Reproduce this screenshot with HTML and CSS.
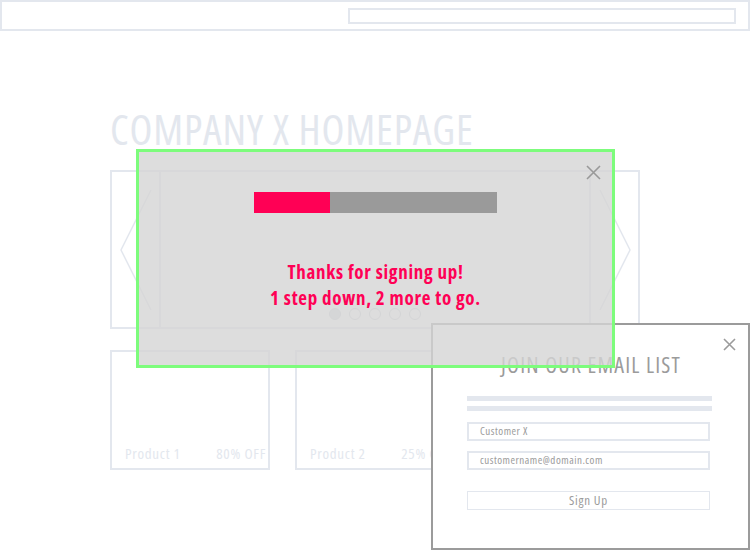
FILE: index.html
```html
<!DOCTYPE html>
<html>
<head>
<meta charset="utf-8">
<link rel="stylesheet" href="styles.css">
</head>
<body>
<header class="topbar"><div class="search"></div></header>
<main class="page">
  <h1 class="title">COMPANY X HOMEPAGE</h1>
  <section class="carousel">
    <div class="side">
      <svg class="chev" width="32" height="124" viewBox="0 0 32 124"><path d="M31 2 L1 62 L31 122" fill="none" stroke="#e3e7ee" stroke-width="1.5"/></svg>
    </div>
    <div class="slide">
      <div class="dots"><span class="dot on"></span><span class="dot"></span><span class="dot"></span><span class="dot"></span><span class="dot"></span></div>
    </div>
    <div class="side">
      <svg class="chev" width="32" height="124" viewBox="0 0 32 124"><path d="M1 2 L31 62 L1 122" fill="none" stroke="#e3e7ee" stroke-width="1.5"/></svg>
    </div>
  </section>
  <section class="products">
    <div class="card"><span>Product 1</span><span>80% OFF</span></div>
    <div class="card"><span>Product 2</span><span>25% OFF</span></div>
    <div class="card"></div>
  </section>
</main>

<div class="email">
  <svg class="close" width="13" height="13" viewBox="0 0 13 13"><path d="M1 1 L12 12 M12 1 L1 12" stroke="#9b9b9b" stroke-width="1.6"/></svg>
  <h2 class="email-title">JOIN OUR EMAIL LIST</h2>
  <div class="bar"></div>
  <div class="bar"></div>
  <div class="field">Customer X</div>
  <div class="field">customername@domain.com</div>
  <div class="btn">Sign Up</div>
</div>

<div class="modal">
  <svg class="close" width="15" height="15" viewBox="0 0 15 15"><path d="M1 1 L14 14 M14 1 L1 14" stroke="#999" stroke-width="1.6"/></svg>
  <div class="progress"><div class="fill"></div></div>
  <p class="thanks">Thanks for signing up!<br>1 step down, 2 more to go.</p>
</div>
</body>
</html>
```
FILE: styles.css
```css
html, body { margin: 0; padding: 0; background: #fff; }
body {
  width: 750px; height: 550px; overflow: hidden; position: relative;
  font-family: "Open Sans", "DejaVu Sans", sans-serif;
  font-stretch: 75%;
}
.topbar {
  box-sizing: border-box; height: 31px; border: 2px solid #e3e7ee;
  display: flex; justify-content: flex-end; align-items: flex-start;
  padding: 6px 12px 0 0;
}
.search { box-sizing: border-box; width: 388px; height: 16px; border: 2px solid #e3e7ee; }
.page { width: 530px; margin-left: 110px; }
.title {
  margin: 0; padding-top: 73px; font-size: 42px; line-height: 50px;
  font-weight: 400; color: #e3e7ee; letter-spacing: 0.85px;
}
.carousel {
  box-sizing: border-box; height: 159px; margin-top: 16px;
  border: 2px solid #e3e7ee; display: flex;
}
.side { width: 47px; display: flex; align-items: center; justify-content: center; }
.slide {
  flex: 1; border-left: 2px solid #e3e7ee; border-right: 2px solid #e3e7ee;
  display: flex; align-items: flex-end; justify-content: center; padding-bottom: 7px;
}
.dots { display: flex; gap: 8px; }
.dot { box-sizing: border-box; width: 12px; height: 12px; border-radius: 50%; border: 1.5px solid #cdd1d8; }
.dot.on { background: #d6dae1; }
.products { display: flex; gap: 25px; margin-top: 21px; }
.card {
  box-sizing: border-box; width: 160px; height: 120px; border: 2px solid #e3e7ee;
  display: flex; justify-content: space-between; align-items: flex-end;
  padding: 0 2px 5px 13px; color: #e3e7ee; font-size: 15px; letter-spacing: 0.7px;
}
.modal {
  position: absolute; left: 136px; top: 149px; width: 479px; height: 219px;
  box-sizing: border-box; border: 3px solid #7dfc7c; background: rgba(212,212,212,0.8);
  display: flex; flex-direction: column; align-items: center;
}
.modal .close { position: absolute; right: 11px; top: 13px; }
.progress { margin-top: 40px; width: 243px; height: 21px; background: #9a9a9a; display: flex; }
.fill { width: 76px; background: #ff0055; }
.thanks {
  margin: 46px 0 0; text-align: center; color: #ff0055; font-weight: 700;
  font-size: 19px; line-height: 26px; letter-spacing: 0.7px;
}
.email {
  position: absolute; left: 431px; top: 323px; width: 319px; height: 227px;
  box-sizing: border-box; border: 2px solid #9b9b9b; background: #fff;
  padding: 0 37px 0 34px; display: flex; flex-direction: column;
}
.email .close { position: absolute; right: 12px; top: 13px; }
.email-title {
  margin: 25px 0 0; text-align: center; font-weight: 400; color: #9b9b9b;
  font-size: 22px; line-height: 28px; letter-spacing: 1.2px; padding-left: 4px;
}
.bar { height: 5px; background: #e3e7ee; margin-top: 5px; width: 245px; }
.email-title + .bar { margin-top: 18px; }
.field {
  box-sizing: border-box; width: 243px; height: 19px; border: 2px solid #e3e7ee;
  margin-top: 11px; font-size: 11px; line-height: 14px; color: #9b9b9b; padding-left: 11px;
  letter-spacing: 0.5px;
}
.bar + .field { margin-top: 11px; }
.field + .field { margin-top: 10px; }
.btn {
  box-sizing: border-box; width: 243px; height: 19px; border: 1px solid #e3e7ee;
  margin-top: 21px; text-align: center; font-size: 13px; line-height: 16px; color: #9b9b9b;
  letter-spacing: 0.7px;
}
```
